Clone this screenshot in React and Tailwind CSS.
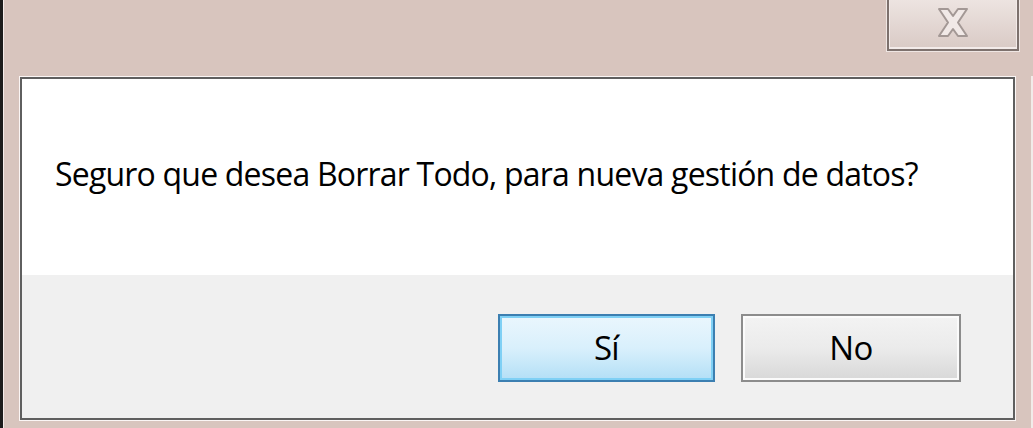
import React from 'react';

const CloseGlyph = () => (
  <svg width="32" height="29" viewBox="-1 -1 32 29">
    <polygon
      points="1,0 10,0 15,7 20,0 29,0 20,13.5 29,27 20,27 15,20 10,27 1,27 10,13.5"
      fill="#f1e9e7"
      stroke="#a39895"
      strokeWidth="2"
      strokeLinejoin="round"
    />
  </svg>
);

const DialogButton = ({ label, primary }) => (
  <button
    className={
      primary
        ? 'w-[217px] h-[68px] border-2 border-[#3c7fb1] bg-gradient-to-b from-[#eaf6fd] via-[#d9f0fc] to-[#b3dff6] shadow-[inset_0_0_0_2px_#7fd0f5] text-[33px] tracking-[-0.6px] text-black'
        : 'w-[220px] h-[68px] border-2 border-[#8c8c8c] bg-gradient-to-b from-[#f3f3f3] via-[#ebebeb] to-[#d8d8d8] shadow-[inset_0_0_0_2px_#fbfbfb] text-[33px] tracking-[-0.6px] text-black'
    }
  >
    {label}
  </button>
);

export default function App() {
  return (
    <div
      className="w-[1033px] h-[428px] bg-[#d8c5be] border-l-[3px] border-l-[#1c1c1c] flex flex-col"
      style={{ fontFamily: '"Open Sans", "Noto Sans", sans-serif' }}
    >
      {/* title bar with the close box hanging off the top edge */}
      <div className="h-[76px] flex justify-end items-start pr-[14px] border-l border-l-[#f4ecea]">
        <div className="w-[132px] h-[51px] border-x-2 border-b-2 border-[#7d716d] bg-gradient-to-b from-[#ede4e1] to-[#d9cac5] shadow-[inset_0_-1px_0_1px_#f3ebe9] flex items-center justify-center pb-[4px] outline outline-1 outline-[#efe6e3]">
          <CloseGlyph />
        </div>
      </div>

      {/* client area */}
      <div className="flex-1 flex pl-[15px] pr-[15px] pb-[7px] border-l border-l-[#f4ecea] border-r-2 border-r-[#f2ebe9]">
        <div className="flex-1 border border-[#fbf6f5]">
          <div className="h-full border-2 border-[#5f5f5f] flex flex-col">
            <div className="h-[196px] bg-white flex items-center pl-[33px] pb-[6px]">
              <p className="text-[32px] text-black tracking-[-0.8px]">
                Seguro que desea Borrar Todo, para nueva gestión de datos?
              </p>
            </div>
            <div className="flex-1 bg-[#f0f0f0] flex justify-end items-center gap-[26px] pr-[52px] pt-[3px]">
              <DialogButton label="Sí" primary />
              <DialogButton label="No" />
            </div>
          </div>
        </div>
      </div>
    </div>
  );
}
